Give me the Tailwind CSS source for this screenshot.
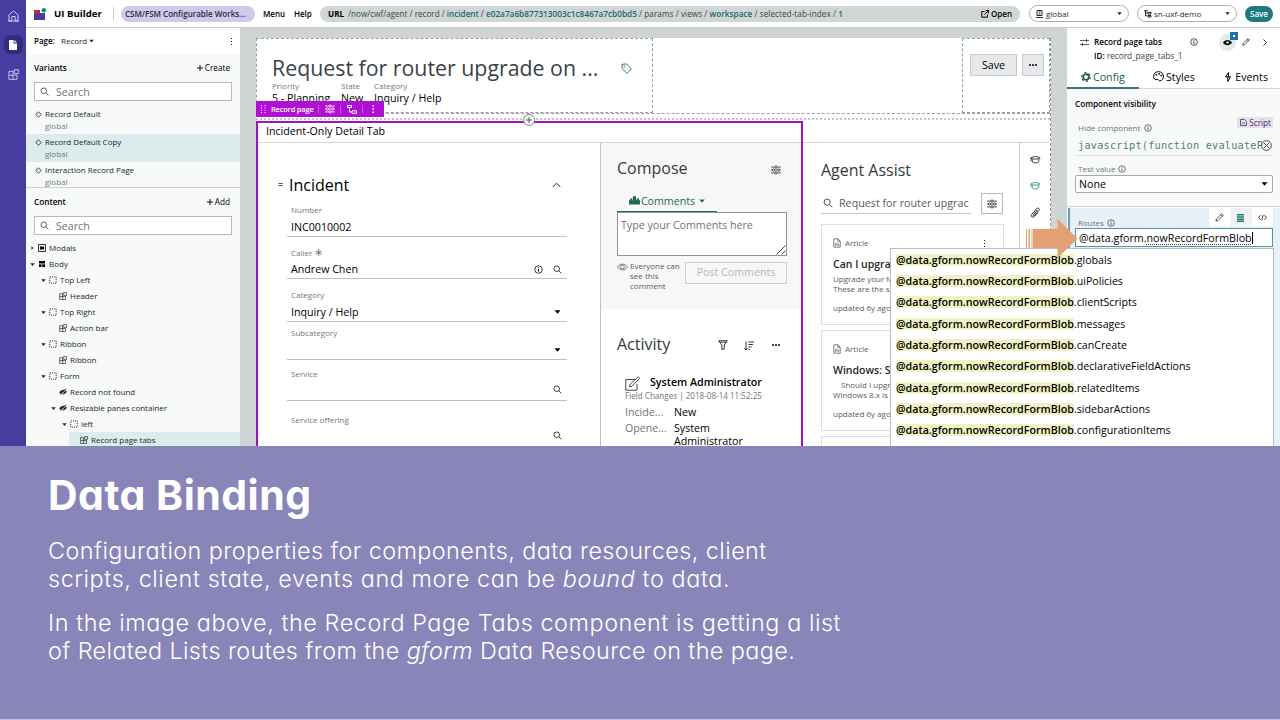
<!DOCTYPE html>
<html lang="en">
<head>
<meta charset="utf-8">
<title>UI Builder</title>
<script src="https://cdn.jsdelivr.net/npm/@tailwindcss/browser@4"></script>
</head>
<body class="w-[1280px] h-[720px] overflow-hidden bg-white font-['Open_Sans',sans-serif] text-[8px] leading-3 text-[#22292b]">
<svg class="hidden">
  <symbol id="search" viewBox="0 0 12 12" fill="none" stroke="currentColor"><circle cx="5" cy="5" r="3.7"/><path d="M7.8 7.8 11.2 11.2"/></symbol>
  <symbol id="info" viewBox="0 0 12 12" fill="none" stroke="currentColor"><circle cx="6" cy="6" r="5"/><path d="M6 5.3V9M6 3v1.3" stroke-width="1.2"/></symbol>
  <symbol id="down" viewBox="0 0 8 5" fill="currentColor"><path d="M.3.4h7.4L4 4.8z"/></symbol>
  <symbol id="right" viewBox="0 0 5 8" fill="currentColor"><path d="M.4.3v7.4L4.8 4z"/></symbol>
  <symbol id="box" viewBox="0 0 12 12" fill="none" stroke="currentColor" stroke-dasharray="1.6 1.6"><path d="M1.2 1.2h9.6v9.6H1.2z" stroke-width="1.4"/></symbol>
  <symbol id="comp" viewBox="0 0 12 12" fill="none" stroke="currentColor"><path d="M6 2.5H1v8.8h8.8V6.2M1 6.8h8.8M5.4 2.5v8.8M7 .8h4.3v4.3H7z"/></symbol>
  <symbol id="hide" viewBox="0 0 12 12"><path d="M.3 6.7C2 3.8 5 2.4 8 2.8L10 1l.8.7L2.2 10l-.8-.7 1-1A7 7 0 0 1 .3 6.7zM10 3.9c.8.5 1.3 1 1.7 1.7C10 8.4 7.500 9.600 4.600 9.400z" fill="currentColor"/></symbol>
  <symbol id="dia" viewBox="0 0 8 8" fill="none" stroke="currentColor"><path d="M4 .9 7.100 4 4 7.100.9 4z"/></symbol>
  <symbol id="sliders" viewBox="0 0 12 12" fill="none" stroke="currentColor"><path d="M0 2.500h4.500M7.500 2.500H12M0 6h1.500M4.500 6H8M11 6h1M0 9.500h4.500M7.500 9.500H12"/><circle cx="6" cy="2.500" r="1.400"/><circle cx="3" cy="6" r="1.400"/><circle cx="9.300" cy="6" r="1.400"/><circle cx="6" cy="9.500" r="1.400"/></symbol>
  <symbol id="pencil" viewBox="0 0 12 12" fill="none" stroke="currentColor"><path d="M1.200 10.800 2 7.800 9 .9l2.100 2.100-7 7zM7.500 2.400l2.100 2.100"/></symbol>
  <symbol id="cap" viewBox="0 0 12 10" fill="none" stroke="currentColor"><path d="M.8 3.300C3 1.200 9 1.200 11.200 3.300 9 5 3 5 .8 3.300zM2.400 4.500v3c1.500 1.800 5.700 1.800 7.200 0v-3M1 3.500v3.300"/></symbol>
  <symbol id="doc" viewBox="0 0 10 12" fill="none" stroke="currentColor"><path d="M1 .8h5.200L9 3.600v7.600H1zM6 .8v3h3M3 9.500V6.500M5 9.500v-4M7 9.500V7"/></symbol>
</svg>

<div class="flex h-[446px] overflow-hidden relative">
  <!-- navigation rail -->
  <nav class="w-[26px] shrink-0 bg-[#473da1] text-[#cfcbee] flex flex-col items-center pt-[10px]">
    <svg class="w-[11px] h-[12px]" viewBox="0 0 11 12" fill="none" stroke="currentColor"><path d="M1 4.800 5.500 1 10 4.800V11H7.200V6.500H3.800V11H1zM0 11h11"/></svg>
    <div class="mt-[13px] size-[19px] rounded-[6px] bg-[#332a80] text-white flex items-center justify-center">
      <svg class="w-[8px] h-[10px]" viewBox="0 0 8 10" fill="currentColor"><path d="M0 0h4.600v3.400H8V10H0zM5.400 0 8 2.600H5.400z"/></svg>
    </div>
    <svg class="mt-[15px] size-[11px]"><use href="#comp"/></svg>
  </nav>

  <div class="flex-1 min-w-0 flex flex-col">
    <header class="h-[28px] shrink-0 border-b border-[#c9cccd] flex items-center text-black">
      <svg class="ml-[8px] w-[12px] h-[12px]" viewBox="0 0 12 12"><path d="M0 2h6v4H0z" fill="#b02a45"/><path d="M0 6h6V5h5v7H0z" fill="#473da1"/><circle cx="9.800" cy="2.200" r="2.200" fill="#1f7f83"/></svg>
      <span class="ml-[8px] w-[59px] text-[9.650px] font-bold">UI Builder</span>
      <i class="w-px h-[13px] bg-[#c9cccd]"></i>
      <div class="ml-[7px] w-[134px] h-[16px] rounded-full bg-[#cfc9ea] pl-[4px] leading-[15px] font-semibold text-[8px] text-[#2a2745]">CSM/FSM Configurable Works...</div>
      <span class="ml-[8px] w-[31px] font-semibold">Menu</span>
      <span class="w-[26px] font-semibold">Help</span>
      <div class="w-[700px] h-[16px] rounded-full bg-[#d0d5d5] flex items-center px-[8px] text-[8.150px] text-[#3c4446]">
        <b class="text-black mr-[4px]">URL</b>
        <span class="whitespace-pre">/now/cwf/agent / record / <b class="font-semibold text-[#17696d]">incident</b> / <b class="font-semibold text-[#17696d] text-[8.250px]">e02a7a6b877313003c1c8467a7cb0bd5</b><span class="tracking-[0.070px]"> / params / views / <b class="font-semibold text-[#17696d]">workspace</b> / selected-tab-index / <b class="font-semibold text-[#17696d]">1</b></span></span>
        <span class="ml-auto flex items-center gap-[2px] text-[8px] text-black font-semibold"><svg class="size-[8px]" viewBox="0 0 8 8" fill="none" stroke="currentColor"><path d="M3.500 1.500H.8v5.700h5.700V4.500M4.600.6h2.800v2.800M7.400.6 3.500 4.500"/></svg>Open</span>
      </div>
      <div class="ml-[9px] w-[100px] h-[17px] rounded-full border border-[#aab0b2] flex items-center px-[6px] text-[#22292b]">
        <svg class="w-[7px] h-[8px] mr-[3px]" viewBox="0 0 7 8" fill="none" stroke="currentColor"><path d="M1 .5h5v5H1zM0 7.500h7M2.500 2h2M2.500 4h2"/></svg>global
        <svg class="ml-auto w-[5px] h-[3px]"><use href="#down"/></svg>
      </div>
      <div class="ml-[8px] w-[100px] h-[17px] rounded-full border border-[#aab0b2] flex items-center px-[6px] text-[#22292b]">
        <svg class="w-[8px] h-[8px] mr-[2px]" viewBox="0 0 8 8" fill="none" stroke="currentColor"><path d="M0 .8h4M1.500.8v5h2M1.500 3h2M4 2.500h3v1.500H4zM4 5.500h3V7H4z"/></svg>sn-uxf-demo
        <svg class="ml-auto w-[5px] h-[3px]"><use href="#down"/></svg>
      </div>
      <div class="ml-[8px] w-[28px] h-[16px] rounded-full bg-[#1f7a80] text-white text-center leading-[15px] font-semibold">Save</div>
    </header>

    <div class="flex-1 min-h-0 flex">
      <!-- page structure -->
      <aside class="w-[214px] shrink-0 bg-[#f8f9f9] flex flex-col">
        <div class="h-[26px] bg-white flex items-center pl-[8px] pr-[7px] shrink-0">
          <b class="font-semibold w-[27px] text-black">Page:</b>Record<svg class="ml-[2px] w-[5px] h-[4px]"><use href="#down"/></svg>
          <svg class="ml-auto w-[3px] h-[7px]" viewBox="0 0 3 7"><path d="M1 0h1v1H1zM1 3h1v1H1zM1 6h1v1H1z" fill="#111"/></svg>
        </div>
        <div class="h-[28px] shrink-0 flex items-center pl-[8px] pr-[10px] text-black"><b class="font-semibold text-[8.200px]">Variants</b><span class="ml-auto flex items-center gap-[2px] text-[8.200px]"><svg class="size-[6px]" viewBox="0 0 6 6" stroke="#111"><path d="M3 0v6M0 3h6"/></svg>Create</span></div>
        <div class="ml-[8px] w-[198px] h-[19px] shrink-0 border border-[#b6babb] bg-white flex items-center pl-[5px] text-[10.670px] text-[#6d7577]"><svg class="size-[9px] mr-[7px] text-[#333]"><use href="#search"/></svg>Search</div>
        <div class="h-[87px] shrink-0 overflow-hidden border-b border-[#cdd1d2] pt-[5px]">
          <div class="h-[28px] pl-[9px] pt-px flex"><svg class="size-[7px] mt-[4px] mr-[3px]"><use href="#dia"/></svg><p class="pt-px">Record Default<br><span class="text-[#70787a]">global</span></p></div>
          <div class="h-[28px] pl-[9px] pt-px flex bg-[#dcebeb]"><svg class="size-[7px] mt-[4px] mr-[3px]"><use href="#dia"/></svg><p class="pt-px">Record Default Copy<br><span class="text-[#70787a]">global</span></p></div>
          <div class="h-[28px] pl-[9px] pt-px flex"><svg class="size-[7px] mt-[4px] mr-[3px]"><use href="#dia"/></svg><p class="pt-px">Interaction Record Page<br><span class="text-[#70787a]">global</span></p></div>
        </div>
        <div class="h-[28px] shrink-0 flex items-center pl-[8px] pr-[10px] text-black"><b class="font-semibold text-[8.200px]">Content</b><span class="ml-auto flex items-center gap-[2px] text-[8.200px]"><svg class="size-[6px]" viewBox="0 0 6 6" stroke="#111"><path d="M3 0v6M0 3h6"/></svg>Add</span></div>
        <div class="ml-[8px] w-[198px] h-[19px] shrink-0 border border-[#b6babb] bg-white flex items-center pl-[5px] text-[10.670px] text-[#6d7577]"><svg class="size-[9px] mr-[7px] text-[#333]"><use href="#search"/></svg>Search</div>
        <div class="mt-[5px] *:h-[16px] *:flex *:items-center *:gap-[3px]">
          <div class="pl-[5px]"><svg class="w-[3px] h-[4px] mr-px"><use href="#right"/></svg><svg class="size-[8px]" viewBox="0 0 8 8"><path d="M.5.5h7v7h-7z" fill="none" stroke="#333"/><path d="M2 2.500h4v3H2z"/></svg>Modals</div>
          <div class="pl-[4px]"><svg class="w-[5px] h-[3px]"><use href="#down"/></svg><svg class="size-[8px]" viewBox="0 0 8 8"><path d="M1 1h6v2.500H1zM1 4.300h2.500V7H1zM4.300 4.300H7V7H4.300z"/></svg>Body</div>
          <div class="pl-[15px]"><svg class="w-[5px] h-[3px]"><use href="#down"/></svg><svg class="size-[8px]"><use href="#box"/></svg>Top Left</div>
          <div class="pl-[33px]"><svg class="size-[8px]"><use href="#comp"/></svg>Header</div>
          <div class="pl-[15px]"><svg class="w-[5px] h-[3px]"><use href="#down"/></svg><svg class="size-[8px]"><use href="#box"/></svg>Top Right</div>
          <div class="pl-[33px]"><svg class="size-[8px]"><use href="#comp"/></svg>Action bar</div>
          <div class="pl-[15px]"><svg class="w-[5px] h-[3px]"><use href="#down"/></svg><svg class="size-[8px]"><use href="#box"/></svg>Ribbon</div>
          <div class="pl-[33px]"><svg class="size-[8px]"><use href="#comp"/></svg>Ribbon</div>
          <div class="pl-[15px]"><svg class="w-[5px] h-[3px]"><use href="#down"/></svg><svg class="size-[8px]"><use href="#box"/></svg>Form</div>
          <div class="pl-[33px]"><svg class="size-[8px]"><use href="#hide"/></svg>Record not found</div>
          <div class="pl-[25px]"><svg class="w-[5px] h-[3px]"><use href="#down"/></svg><svg class="size-[8px]"><use href="#hide"/></svg>Resizable panes container</div>
          <div class="pl-[36px]"><svg class="w-[5px] h-[3px]"><use href="#down"/></svg><svg class="size-[8px]"><use href="#box"/></svg>left</div>
          <div class="ml-[43px] pl-[11px] bg-[#dcebeb]"><svg class="size-[8px]"><use href="#comp"/></svg>Record page tabs</div>
        </div>
      </aside>

      <!-- canvas -->
      <main class="w-[827px] shrink-0 bg-[#cfd4d5] pl-[16px] pt-[10px] relative">
        <div class="w-[795px] h-[408px] bg-white flex flex-col border-r border-dashed border-[#8e9496]">
          <div class="h-[76px] shrink-0 flex justify-between border-b border-dashed border-[#9aa0a2]">
            <div class="w-[397px] h-[75px] border border-dashed border-[#9aa0a2] pl-[15px] pt-[13px]">
              <div class="h-[32px] flex items-center text-[21.330px] leading-8 text-[#3b4244]">Request for router upgrade on ...
                <svg class="ml-[23px] size-[11px]" viewBox="0 0 12 12" fill="none" stroke="#2d6b63"><path d="M1 1.500 6 1l5.200 5.300-4.500 5L1.400 6.300z"/><circle cx="3.600" cy="3.700" r=".5"/></svg>
              </div>
              <div class="-mt-[4px] flex text-[#70787a]"><p class="w-[69px]">Priority<br><span class="text-[10.670px] leading-[13px] text-black">5 - Planning</span></p><p class="w-[33px]">State<br><span class="text-[10.670px] leading-[13px] text-black">New</span></p><p>Category<br><span class="text-[10.670px] leading-[13px] text-black">Inquiry / Help</span></p></div>
            </div>
            <div class="w-[88px] h-[75px] border border-dashed border-[#9aa0a2] pl-[7px] pt-[15px] flex gap-[5px]">
              <div class="w-[47px] h-[22px] border border-[#c6cacc] bg-[#e6e8eb] text-center text-[10.670px] leading-5 text-black">Save</div>
              <div class="w-[22px] h-[22px] border border-[#c6cacc] bg-[#e6e8eb] flex items-center justify-center gap-px"><i class="size-[2px] rounded-full bg-black"></i><i class="size-[2px] rounded-full bg-black"></i><i class="size-[2px] rounded-full bg-black"></i></div>
            </div>
          </div>
          <div class="h-[6px] shrink-0 border-b-2 border-dotted border-[#c3c7c8]"></div>
          <div class="h-[23px] shrink-0 border-b border-[#d3d6d7] pl-[10px] leading-[22px] text-[10.670px] text-black">Incident-Only Detail Tab</div>
          <div class="flex-1 min-h-0 flex">
            <!-- incident form -->
            <section class="w-[345px] shrink-0 border-r border-[#bfc3c5] pl-[33px] pt-[28px]">
              <div class="w-[278px] h-[28px] flex items-center text-[16px] text-black pr-[6px]"><span class="w-[11px] text-[9px] -ml-[11px] font-bold text-[#555]">=</span><span>Incident</span><svg class="ml-auto w-[9px] h-[6px]" viewBox="0 0 9 6" fill="none" stroke="#222"><path d="M.7 5 4.500 1.200 8.300 5"/></svg></div>
              <div class="-ml-[2px] w-[280px] pl-[4px] *:-ml-[4px] *:pl-[4px] *:border-[#bcc0c2] text-[10.670px] text-black">
                <div class="h-[38px] border-b flex flex-col"><p class="mt-[5px] text-[8px] text-[#70787a]">Number</p><p class="mt-[4px] leading-[14px]">INC0010002</p></div>
                <div class="h-[42px] border-b flex flex-col"><p class="mt-[9px] text-[8px] text-[#70787a]">Caller <span class="text-[11px]">∗</span></p><div class="mt-[3px] h-[14px] flex items-center pr-[5px]">Andrew Chen<svg class="ml-auto size-[9px] mr-[10px]"><use href="#info"/></svg><svg class="size-[9px]"><use href="#search"/></svg></div></div>
                <div class="h-[43px] border-b flex flex-col"><p class="mt-[10px] text-[8px] text-[#70787a]">Category</p><div class="mt-[4px] h-[14px] flex items-center pr-[6px]">Inquiry / Help<svg class="ml-auto w-[7px] h-[4px]"><use href="#down"/></svg></div></div>
                <div class="h-[38px] border-b flex flex-col"><p class="mt-[5px] text-[8px] text-[#70787a]">Subcategory</p><svg class="ml-auto mr-[6px] mt-[9px] w-[7px] h-[4px]"><use href="#down"/></svg></div>
                <div class="h-[41px] border-b flex flex-col"><p class="mt-[8px] text-[8px] text-[#70787a]">Service</p><svg class="ml-auto mr-[5px] mt-[5px] size-[9px]"><use href="#search"/></svg></div>
                <div class="h-[44px] flex flex-col"><p class="mt-[13px] text-[8px] text-[#70787a]">Service offering</p><svg class="ml-auto mr-[5px] mt-[5px] size-[9px]"><use href="#search"/></svg></div>
              </div>
            </section>
            <!-- compose and activity -->
            <section class="w-[202px] shrink-0">
              <div class="h-[166px] bg-[#f7f7f7] pl-[16px] pr-[16px] pt-[10px]">
                <div class="h-[30px] flex items-center justify-between text-[16px] text-[#333b3d] pr-[6px]"><span>Compose</span><svg class="size-[10px] mt-[4px]"><use href="#sliders"/></svg></div>
                <div class="mt-[7px] w-[100px] h-[23px] border-b-2 border-[#22685a] text-[#22685a] text-[10.670px] flex items-center justify-center gap-px"><svg class="w-[11px] h-[9px]" viewBox="0 0 11 9" fill="currentColor"><path d="M0 4.500 1 4V2.500h2.200V4l.6.300V1.800L4.500 0h2l.7 1.800v2.500l.6-.3V2.500H10V4l1 .5V8.500H0z"/></svg>Comments<svg class="ml-[3px] w-[6px] h-[4px]"><use href="#down"/></svg></div>
                <div class="-mt-px w-[170px] h-[44px] border border-[#8f9697] bg-white px-[3px] pt-[6px] text-[10.670px] text-[#6d7577] flex"><span>Type your Comments here</span></div>
                <svg class="-mt-[11px] ml-auto mr-px w-[10px] h-[10px]" viewBox="0 0 10 10" stroke="#444"><path d="M.5 9.500 9.500.5M5.500 9.500 9.500 5.500"/></svg>
                <div class="mt-[6px] flex text-[8px] leading-[10px] text-[#555d5f]"><svg class="w-[11px] h-[8px] mr-[2px] mt-[2px]" viewBox="0 0 11 8" fill="none" stroke="currentColor" stroke-width=".8"><path d="M.5 4C3 .2 8 .2 10.500 4 8 7.800 3 7.800.5 4z"/><circle cx="5.500" cy="4" r="1.900"/></svg><p class="w-[55px]">Everyone can see this comment</p><div class="mt-px w-[102px] h-[22px] border border-[#cdd0d1] text-[10.670px] leading-[19px] text-center text-[#b5b9ba]">Post Comments</div></div>
              </div>
              <div class="pl-[16px] pr-[23px] pt-[20px]">
                <div class="h-[30px] flex items-center text-[16px] text-[#333b3d]"><span class="mr-auto">Activity</span>
                  <svg class="w-[10px] h-[10px] mt-[2px]" viewBox="0 0 10 10" fill="none" stroke="currentColor"><path d="M.7.7h8.600L6.200 5v4L3.800 9.500V5zM1.200 2.200h7.600"/></svg>
                  <svg class="ml-[16px] w-[10px] h-[10px] mt-[3px]" viewBox="0 0 10 10" fill="none" stroke="currentColor"><path d="M2 .5v8.500M.3 7.200 2 9l1.700-1.800M4.500 1H10M4.500 3.500H9M4.500 6h3M4.500 8.500H6"/></svg>
                  <span class="ml-[18px] mt-[2px] flex gap-px"><i class="size-[2px] rounded-full bg-black"></i><i class="size-[2px] rounded-full bg-black"></i><i class="size-[2px] rounded-full bg-black"></i></span></div>
                <div class="mt-[15px] pl-[8px]">
                  <div class="flex h-[15px] items-center text-[10.650px] font-semibold text-black"><svg class="mt-[3px] w-[16px] h-[15px] mr-[9px]" viewBox="0 0 16 15" fill="none" stroke="#444"><path d="M10 3.500H.8v10.700H12V8M4.500 11l.7-2.700L13.200.8l1.500 1.500L7 10.200z"/></svg>System Administrator</div>
                  <p class="mt-px text-[#6d7577] text-[8.080px] leading-[11px]">Field Changes | 2018-08-14 11:52:25</p>
                  <div class="mt-[3px] grid grid-cols-[49px_1fr] text-[10.670px] text-black leading-[13px]"><span class="text-[#6d7577] leading-[16px]">Incide...</span><span class="leading-[16px]">New</span><span class="text-[#6d7577] leading-[16px]">Opene...</span><span class="pt-[2px]">System<br>Administrator</span></div>
                </div>
              </div>
            </section>
            <!-- agent assist -->
            <section class="w-[217px] shrink-0 border-r border-[#c9cccd] pl-[18px] pt-[12px]">
              <div class="h-[30px] flex items-center text-[15.970px] text-[#333b3d]">Agent Assist</div>
              <div class="mt-[8px] flex"><div class="w-[150px] h-[21px] border-b border-[#c3c7c9] flex items-center pl-[2px] text-[10.720px] text-[#555d5f]"><svg class="size-[10px] mr-[6px] text-[#333]"><use href="#search"/></svg>Request for router upgrac</div><div class="ml-[10px] w-[22px] h-[21px] border border-[#b6babb] flex items-center justify-center"><svg class="size-[10px]"><use href="#sliders"/></svg></div></div>
              <div class="mt-[10px] w-[183px] h-[101px] border border-[#dcdedf] px-[11px] pt-[11px] text-[#555d5f]">
                <div class="flex items-center h-[14px] gap-[4px]"><svg class="w-[8px] h-[10px]"><use href="#doc"/></svg>Article<svg class="ml-auto mr-[6px] w-[3px] h-[7px]" viewBox="0 0 3 7"><path d="M1 0h1v1H1zM1 3h1v1H1zM1 6h1v1H1z" fill="#111"/></svg></div>
                <p class="mt-[7px] text-[10.500px] leading-[14px] font-semibold text-[#22292b]">Can I upgra</p><p class="mt-[3px] leading-[10px] whitespace-nowrap">Upgrade your M<br>These are the sp</p><p class="mt-[8px]">updated 6y ago</p>
              </div>
              <div class="mt-[5px] w-[183px] h-[101px] border border-[#dcdedf] px-[11px] pt-[11px] text-[#555d5f]">
                <div class="flex items-center h-[14px] gap-[4px]"><svg class="w-[8px] h-[10px]"><use href="#doc"/></svg>Article</div>
                <p class="mt-[7px] text-[10.500px] leading-[14px] font-semibold text-[#22292b]">Windows: S</p><p class="mt-[3px] leading-[10px] whitespace-nowrap"><span class="ml-[8px]">Should I upgr</span><br>Windows 8.x is</p><p class="mt-[8px]">updated 6y ago</p>
              </div>
              <div class="mt-[5px] w-[183px] h-[30px] border border-[#dcdedf]"></div>
            </section>
            <div class="flex-1 flex flex-col items-center pt-[12px] gap-[17px]">
              <svg class="w-[11px] h-[9px]"><use href="#cap"/></svg>
              <svg class="w-[11px] h-[9px] text-[#3a9582]"><use href="#cap"/></svg>
              <svg class="w-[10px] h-[11px]" viewBox="0 0 10 11" fill="none" stroke="currentColor"><path d="M7.500 3 3.500 7.500c-.8.9.2 1.800 1 .9L8.800 3.500C10.200 1.800 8.200.2 6.700 1.700L2 7c-2 2.300.5 4.400 2.500 2.300L8 5.500"/></svg>
            </div>
          </div>
        </div>
        <!-- selection outline, toolbar and insert handle over the canvas -->
        <div class="absolute left-[16px] top-[93px] w-[547px] h-[330px] border-2 border-[#a112c4] border-b-0"></div>
        <div class="absolute left-[16px] top-[73px] w-[128px] h-[16px] bg-[#b010d4] text-white text-[7.500px] font-semibold flex items-center pl-[5px]">
          <svg class="w-[5px] h-[8px] mr-[5px]" viewBox="0 0 5 8"><path d="M0 0h1v1H0zM3.500 0h1v1h-1zM0 2.300h1v1H0zM3.500 2.300h1v1h-1zM0 4.600h1v1H0zM3.500 4.600h1v1h-1zM0 7h1v1H0zM3.500 7h1v1h-1z" fill="#fff"/></svg><span class="w-[47px] whitespace-nowrap -tracking-[0.200px]">Record page</span><i class="w-px h-[8px] bg-white/30"></i>
          <svg class="ml-[6px] size-[10px]"><use href="#sliders"/></svg><i class="ml-[5px] w-px h-[8px] bg-white/30"></i>
          <svg class="ml-[6px] w-[10px] h-[9px]" viewBox="0 0 10 9" fill="none" stroke="#fff"><path d="M.5.5h4v2h-4zM2.500 2.500V7H5M5 5.800h4.500v2.500H5z"/></svg><i class="ml-[5px] w-px h-[8px] bg-white/30"></i>
          <svg class="ml-[9px] w-[3px] h-[8px]" viewBox="0 0 3 8"><path d="M.5 0H2v1.500H.5zM.5 3.200H2v1.500H.5zM.5 6.500H2V8H.5z" fill="#fff"/></svg>
        </div>
        <div class="absolute left-[283px] top-[86px] size-[12px] rounded-full border border-[#7c8587] bg-white flex items-center justify-center"><svg class="size-[6px]" viewBox="0 0 6 6" stroke="#555"><path d="M3 0v6M0 3h6"/></svg></div>
      </main>

      <!-- component settings -->
      <aside class="flex-1 min-w-0 bg-[#f8f9f9] flex flex-col">
        <div class="h-[61px] shrink-0 bg-white border-b border-[#d3d6d7] flex flex-col">
          <div class="h-[28px] flex items-center pl-[13px] pr-[13px] text-black">
            <svg class="size-[9px] mr-[5px]" viewBox="0 0 9 9" fill="none" stroke="#333" stroke-width=".8"><path d="M0 2.500h9M6.500.8v3.400M0 6.500h9M2.500 4.800v3.400"/></svg><b class="w-[96px] font-semibold text-[8.180px]">Record page tabs</b><svg class="size-[8px]"><use href="#info"/></svg>
            <div class="ml-[21px] size-[17px] rounded-full bg-[#e0ecec] flex items-center justify-center relative"><svg class="w-[9px] h-[7px]" viewBox="0 0 9 7"><path d="M0 3.500C2 0 7 0 9 3.500 7 7 2 7 0 3.500z"/><circle cx="4.500" cy="3.500" r="1.200" fill="#fff"/></svg><i class="absolute left-[11px] -top-[2px] size-[8px] bg-[#1f6fb2] flex items-center justify-center"><i class="size-[2px] bg-white"></i></i></div>
            <svg class="ml-[6px] size-[8px]"><use href="#pencil"/></svg><svg class="ml-auto w-[4px] h-[7px]" viewBox="0 0 4 7" fill="none" stroke="#333"><path d="M.5.500 3.500 3.500.5 6.500"/></svg>
          </div>
          <p class="-mt-[6px] pl-[27px] text-[8.200px] text-[#3c4446]"><span class="text-black font-semibold">ID:</span> record_page_tabs_1</p>
          <div class="flex-1 flex text-[10.670px] text-black mt-[4px] -mb-px">
            <div class="w-[72px] border-b-2 border-[#3a777a] text-[#1d5a50] flex items-center gap-[2px] pl-[14px]"><svg class="size-[10px]" viewBox="0 0 10 10" fill="none"><circle cx="5" cy="5" r="2.800" stroke="currentColor" stroke-width="1.800"/><circle cx="5" cy="5" r="4.300" stroke="currentColor" stroke-width="1.200" stroke-dasharray="2.200 2.300"/></svg>Config</div>
            <div class="pl-[14px] flex items-center gap-[2px] pb-[2px]"><svg class="size-[11px]" viewBox="0 0 10 10" fill="none" stroke="currentColor" stroke-width=".9"><path d="M5 .6C2.400.6.5 2.500.5 5c0 2 1.700 3.400 3.300 2.800C5.500 7.200 5 9.200 6.300 9c2-.3 3.300-2 3.200-4.200C9.400 2.300 7.500.6 5 .6z"/><circle cx="3" cy="3.500" r=".5"/><circle cx="5.500" cy="2.600" r=".5"/><circle cx="7.500" cy="4.200" r=".5"/></svg>Styles</div>
            <div class="ml-auto pr-[12px] flex items-center gap-[3px] pb-[2px]"><svg class="w-[8px] h-[10px]" viewBox="0 0 8 10" fill="none" stroke="currentColor"><path d="M4.500.5 1.500 4.800h5L3.800 9.500M4.500.5v4.300M3.800 5v4.500"/></svg>Events</div>
          </div>
        </div>
        <div class="h-[118px] shrink-0 border-b border-[#d3d6d7] px-[8px] pt-[9px]">
          <b class="block font-semibold text-[8.180px] text-black">Component visibility</b>
          <div class="mt-[7px] flex items-start text-[#6d7577] pl-[3px]"><span class="mt-[5px] flex items-center gap-[4px]">Hide component<svg class="size-[8px] text-[#333]"><use href="#info"/></svg></span><span class="ml-auto h-[11px] bg-[#e8e0f0] pl-[3px] pr-[2px] flex items-center gap-[2px] text-[8.200px] leading-[11px] text-[#3c3450] -mr-px"><svg class="size-[7px]" viewBox="0 0 7 7" fill="none" stroke="currentColor" stroke-width=".8"><path d="M.5.500h4L6.500 2.500v4h-6zM2 4h3"/></svg>Script</span></div>
          <div class="h-[22px] border-b border-[#dcdfe0] flex items-center pt-[2px] pl-[3px] font-['DejaVu_Sans_Mono',monospace] text-[10.200px] text-[#4e7f7f]"><span class="w-[184px] shrink-0 overflow-hidden whitespace-nowrap tracking-[0.250px]">javascript(function evaluateP</span><svg class="-ml-px size-[11px] shrink-0" viewBox="0 0 11 11" fill="#f8f9f9" stroke="#333" stroke-width=".9"><circle cx="5.500" cy="5.500" r="4.800"/><path d="M3 3 8 8M8 3 3 8"/></svg></div>
          <div class="mt-[7px] flex items-center gap-[2px] text-[#6d7577] pl-[3px]">Test value<svg class="size-[8px] text-[#333]"><use href="#info"/></svg></div>
          <div class="w-[198px] h-[18px] border border-[#a5aaac] rounded-[2px] bg-white flex items-center pl-[3px] pr-[4px] text-[10.670px] text-black">None<svg class="ml-auto w-[7px] h-[4px]"><use href="#down"/></svg></div>
        </div>
        <div class="mt-px ml-px flex-1 border-l-2 border-[#6d9fb4] h-[39px] bg-[#e8f1f7] flex flex-col pl-[5px] pr-[7px]">
          <div class="flex justify-between h-[20px]"><span class="pt-[9px] pl-[3px] flex items-center gap-[3px] text-[#6d7577] h-[20px]">Routes<svg class="size-[8px] text-[#333]"><use href="#info"/></svg></span>
            <div class="w-[64px] h-[19px] bg-white shadow-xs flex"><span class="flex-1 flex items-center justify-center"><svg class="size-[9px]"><use href="#pencil"/></svg></span><span class="flex-1 bg-[#f0f3f4] flex items-center justify-center"><svg class="w-[7px] h-[8px]" viewBox="0 0 7 8" fill="#1d7a6a"><path d="M0 0h7v1.500H0zM0 2.200h7v1.500H0zM0 4.400h7v1.500H0zM0 6.500h7V8H0z"/></svg></span><span class="flex-1 flex items-center justify-center"><svg class="w-[9px] h-[7px]" viewBox="0 0 9 7" fill="none" stroke="#333" stroke-width=".9"><path d="M2.500 1.200.6 3.500l1.900 2.300M6.500 1.200 8.400 3.500 6.500 5.800M5.200.8 3.800 6.200"/></svg></span></div></div>
          <div class="w-[198px] h-[19px] border border-[#4f9a9e] bg-white flex items-center pl-[3px] text-[10.700px] text-black"><span>@data.gform.<span class="underline decoration-dotted decoration-[#444] decoration-1 underline-offset-2">nowRecordFormBlob</span></span><i class="w-px h-[12px] bg-black"></i></div>
        </div>
      </aside>
    </div>
  </div>

  <!-- autocomplete suggestions -->
  <div class="absolute left-[890px] top-[248px] w-[384px] h-[210px] border border-[#b9bdc0] bg-white pl-[5px] text-[10.650px] text-black *:h-[21.350px] *:flex *:items-center">
    <p><mark class="bg-[#f1f2c4] font-semibold text-[10.680px]">@data.gform.nowRecordFormBlob</mark>.globals</p>
    <p><mark class="bg-[#f1f2c4] font-semibold text-[10.680px]">@data.gform.nowRecordFormBlob</mark>.uiPolicies</p>
    <p><mark class="bg-[#f1f2c4] font-semibold text-[10.680px]">@data.gform.nowRecordFormBlob</mark>.clientScripts</p>
    <p><mark class="bg-[#f1f2c4] font-semibold text-[10.680px]">@data.gform.nowRecordFormBlob</mark>.messages</p>
    <p><mark class="bg-[#f1f2c4] font-semibold text-[10.680px]">@data.gform.nowRecordFormBlob</mark>.canCreate</p>
    <p><mark class="bg-[#f1f2c4] font-semibold text-[10.680px]">@data.gform.nowRecordFormBlob</mark>.declarativeFieldActions</p>
    <p><mark class="bg-[#f1f2c4] font-semibold text-[10.680px]">@data.gform.nowRecordFormBlob</mark>.relatedItems</p>
    <p><mark class="bg-[#f1f2c4] font-semibold text-[10.680px]">@data.gform.nowRecordFormBlob</mark>.sidebarActions</p>
    <p><mark class="bg-[#f1f2c4] font-semibold text-[10.680px]">@data.gform.nowRecordFormBlob</mark>.configurationItems</p>
  </div>
  <!-- pointer arrow -->
  <svg class="absolute left-[1026px] top-[218px] w-[52px] h-[41px]" viewBox="0 0 52 41" fill="#e3a074"><path d="M0 11h1v19H0zM2.500 11h1.500v19H2.500zM5.500 11h1v19h-1zM7 11h24.500V1L51.500 20.500 31.500 40V30H7z"/></svg>
</div>

<!-- caption -->
<section class="h-[274px] bg-[#8985b9] border-b border-[#c2c0db] text-white pl-[48px] pt-[25px] font-['Inter',sans-serif] [font-feature-settings:'cv11'] whitespace-nowrap">
  <h1 class="text-[41px] leading-[48px] font-bold tracking-[0.480px]">Data Binding</h1>
  <p class="mt-[18px] text-[23.400px] leading-[28px] font-light"><span class="tracking-[0.430px]">Configuration properties for components, data resources, client</span><br><span class="tracking-[0.590px]">scripts, client state, events and more can be <em>bound</em> to data.</span></p>
  <p class="mt-[16px] text-[23.400px] leading-[28px] font-light"><span class="tracking-[0.555px]">In the image above, the Record Page Tabs component is getting a list</span><br><span class="tracking-[0.390px]">of Related Lists routes from the <em>gform</em> Data Resource on the page.</span></p>
</section>
</body>
</html>
